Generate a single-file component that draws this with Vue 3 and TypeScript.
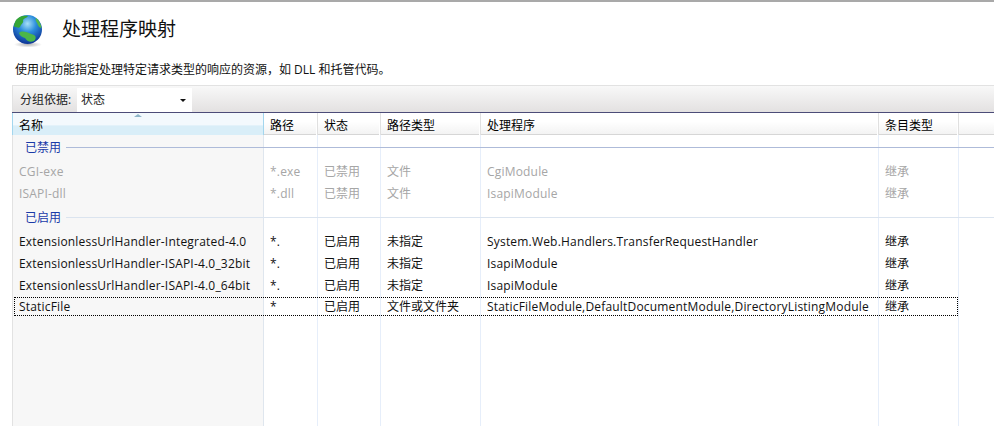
<script setup lang="ts">
interface Row { name: string; path: string; state: string; type: string; handler: string; entry: string; focus?: boolean }
interface Group { label: string; muted: boolean; rows: Row[] }
const columns = ['名称', '路径', '状态', '路径类型', '处理程序', '条目类型']
const groups: Group[] = [
  { label: '已禁用', muted: true, rows: [
    { name: 'CGI-exe', path: '*.exe', state: '已禁用', type: '文件', handler: 'CgiModule', entry: '继承' },
    { name: 'ISAPI-dll', path: '*.dll', state: '已禁用', type: '文件', handler: 'IsapiModule', entry: '继承' },
  ] },
  { label: '已启用', muted: false, rows: [
    { name: 'ExtensionlessUrlHandler-Integrated-4.0', path: '*.', state: '已启用', type: '未指定', handler: 'System.Web.Handlers.TransferRequestHandler', entry: '继承' },
    { name: 'ExtensionlessUrlHandler-ISAPI-4.0_32bit', path: '*.', state: '已启用', type: '未指定', handler: 'IsapiModule', entry: '继承' },
    { name: 'ExtensionlessUrlHandler-ISAPI-4.0_64bit', path: '*.', state: '已启用', type: '未指定', handler: 'IsapiModule', entry: '继承' },
    { name: 'StaticFile', path: '*', state: '已启用', type: '文件或文件夹', handler: 'StaticFileModule,DefaultDocumentModule,DirectoryListingModule', entry: '继承', focus: true },
  ] },
]
</script>

<template>
  <div class="page">
    <header class="title">
      <svg class="globe" width="32" height="34" viewBox="0 0 32 34">
        <defs>
          <radialGradient id="sea" cx="0.5" cy="0.3" r="0.75">
            <stop offset="0" stop-color="#a6e0f7" />
            <stop offset="0.4" stop-color="#2b8ddc" />
            <stop offset="1" stop-color="#08288c" />
          </radialGradient>
          <radialGradient id="shade" cx="0.5" cy="0.5" r="0.5">
            <stop offset="0" stop-color="#777" stop-opacity="0.55" />
            <stop offset="1" stop-color="#777" stop-opacity="0" />
          </radialGradient>
        </defs>
        <ellipse cx="16" cy="30.500" rx="14" ry="3" fill="url(#shade)" />
        <circle cx="15.500" cy="15.500" r="14.500" fill="url(#sea)" />
        <path d="M4 6 C7 2 12 1 16 2 C15 4 12 4 11 6 C12 9 9 10 8 13 C6 15 4 12 2 13 C2 10 3 8 4 6 Z" fill="#35a636" />
        <path d="M24 4 C27 6 29 10 29.500 14 C27 14 26 11 25 9 C24 7 23 6 24 4 Z" fill="#54b84a" />
        <path d="M7 19 C10 16 15 18 19 20 C24 21 25 24 22 27 C18 29 15 27 13 24 C10 23 8 22 7 19 Z" fill="#4cb648" />
      </svg>
      <h1>处理程序映射</h1>
    </header>
    <p class="desc">使用此功能指定处理特定请求类型的响应的资源，如 DLL 和托管代码。</p>
    <section class="panel">
      <div class="toolbar">
        <span class="group-by">分组依据:</span>
        <div class="combo"><span>状态</span><i class="caret"></i></div>
      </div>
      <div class="header grid">
        <div v-for="(c, i) in columns" :key="c" class="hcell" :class="{ sorted: i === 0 }">
          <i v-if="i === 0" class="sort"></i>{{ c }}
        </div>
        <div class="hcell"></div>
      </div>
      <div class="body">
        <div class="lines grid" aria-hidden="true">
          <div class="line first"></div>
          <div v-for="n in 5" :key="n" class="line"></div>
        </div>
        <div class="content">
          <template v-for="(g, gi) in groups" :key="g.label">
            <div class="group" :class="{ strong: gi === 0 }"><span>{{ g.label }}</span><i></i></div>
            <div
              v-for="r in g.rows"
              :key="r.name"
              class="row grid"
              :class="{ muted: g.muted, focus: r.focus }"
            >
              <div class="cell latin">{{ r.name }}</div>
              <div class="cell latin">{{ r.path }}</div>
              <div class="cell">{{ r.state }}</div>
              <div class="cell">{{ r.type }}</div>
              <div class="cell latin">{{ r.handler }}</div>
              <div class="cell">{{ r.entry }}</div>
            </div>
          </template>
        </div>
      </div>
    </section>
  </div>
</template>

<style>
html, body { margin: 0; background: #fff; overflow: hidden; }
</style>

<style scoped>
.page {
  width: 994px;
  height: 426px;
  display: flex;
  flex-direction: column;
  box-sizing: border-box;
  border-top: 2px solid #a9a9a9;
  font: 12px/16px "Open Sans", "Noto Sans CJK SC", sans-serif;
  color: #1a1a1a;
  overflow: hidden;
}
.title {
  display: flex;
  align-items: center;
  height: 48px;
  padding: 6px 0 0 12px;
  box-sizing: border-box;
}
.globe { margin-right: 18px; margin-top: 4px; }
h1 {
  margin: 0;
  font-weight: 400;
  font-size: 19px;
  line-height: 28px;
  color: #111;
}
.desc {
  margin: 12px 0 0 15px;
  height: 16px;
  color: #111;
}
.panel {
  margin: 7px 0 0 12px;
  flex: 1;
  display: flex;
  flex-direction: column;
  min-height: 0;
}
.toolbar {
  height: 27px;
  box-sizing: border-box;
  border-top: 1px solid #e2e2e2;
  border-left: 1px solid #e2e2e2;
  background: linear-gradient(#f8f8f8, #e3e1e1);
  display: flex;
  align-items: flex-end;
  padding-left: 7px;
}
.group-by { width: 57px; height: 24px; line-height: 24px; color: #222; }
.combo {
  width: 115px;
  height: 24px;
  background: #fff;
  display: flex;
  align-items: center;
  justify-content: space-between;
  padding: 0 6px 0 4px;
  box-sizing: border-box;
}
.caret {
  width: 0;
  height: 0;
  border: 3px solid transparent;
  border-top: 3px solid #111;
  border-bottom: 0;
}
.grid {
  display: grid;
  grid-template-columns: 252px 54px 63px 100px 398px 80px 1fr;
}
.header {
  height: 23px;
  box-sizing: border-box;
  border-top: 1px solid #4c4c78;
  border-bottom: 1px solid #d6d6d6;
  background: linear-gradient(#fff 0, #fff 40%, #f3f3f3 100%);
}
.hcell {
  position: relative;
  padding-left: 6px;
  line-height: 25px;
  border-right: 1px solid #e0e0e0;
  box-shadow: inset -1px 0 0 #fff;
  color: #000;
}
.hcell:first-child { padding-left: 7px; }
.hcell:last-child { border-right: 0; box-shadow: none; }
.hcell.sorted {
  background: linear-gradient(#f3f9fd 0, #f3f9fd 45%, #d9eef8 50%, #d9eef8 100%);
  box-shadow: inset 1px 0 0 #a3d6ee, inset 0 -1px 0 #a3d6ee;
  border-right: 1px solid #a3d6ee;
  margin-bottom: -1px;
}
.sort {
  position: absolute;
  left: 122px;
  top: 1px;
  width: 0;
  height: 0;
  border: 4px solid transparent;
  border-top: 0;
  border-bottom: 3px solid #8fb6c9;
}
.body { position: relative; flex: 1; min-height: 0; }
.lines {
  position: absolute;
  inset: 0;
}
.line { border-right: 1px solid #e6eefa; }
.line.first {
  background: #f7f7f7;
  border-left: 1px solid #e2e2e2;
  border-right-color: #dfe6ee;
}
.content { position: relative; padding-top: 1px; }
.group {
  height: 22px;
  margin-bottom: 2px;
  display: flex;
  align-items: center;
  padding-left: 13px;
  color: #1a3aa8;
}
.group span { padding-top: 2px; }
.group i {
  flex: 1;
  height: 1px;
  margin-left: 5px;
  background: #dbe4ef;
}
.group.strong i { background: #aebbd9; }
.row {
  height: 22px;
  align-items: center;
  color: #111;
}
.row.muted { color: #a6a6a6; }
.row.muted + .group { margin-top: 2px; }
.row.focus {
  height: 19px;
  margin-top: 1px;
  width: 944px;
  margin-left: 2px;
  box-sizing: border-box;
  outline: 1px dotted #000;
  outline-offset: -1px;
  grid-template-columns: 250px 54px 63px 100px 398px 79px;
}
.cell {
  padding-left: 6px;
  padding-top: 1px;
  white-space: nowrap;
  line-height: 16px;
}
.row:not(.focus) .cell:first-child { padding-left: 7px; }
.row.focus .cell:first-child { padding-left: 5px; }
.latin { letter-spacing: 0.19px; }
</style>
